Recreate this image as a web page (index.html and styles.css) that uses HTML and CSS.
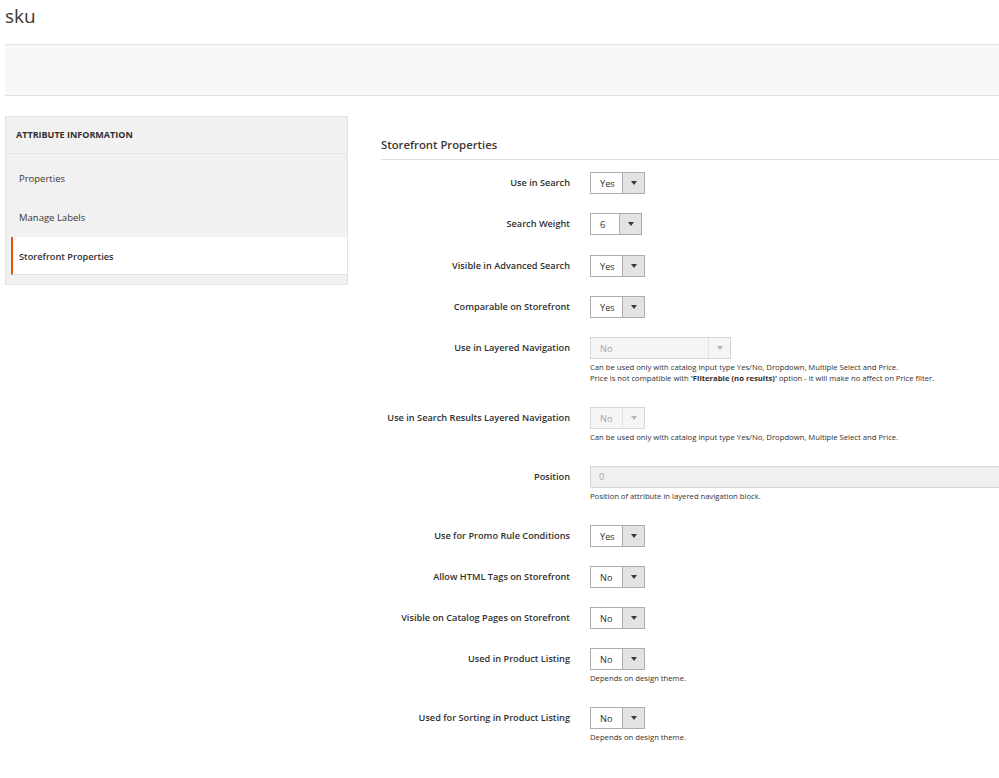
FILE: index.html
```html
<!DOCTYPE html>
<html lang="en">
<head>
<meta charset="utf-8">
<title>sku</title>
<link rel="stylesheet" href="styles.css">
</head>
<body>
<h1 class="page-title">sku</h1>
<div class="actions-bar"></div>
<div class="main">
  <aside class="sidebar">
    <div class="sidebar-head">ATTRIBUTE INFORMATION</div>
    <ul class="tabs">
      <li class="tab">Properties</li>
      <li class="tab">Manage Labels</li>
      <li class="tab active">Storefront Properties</li>
    </ul>
  </aside>
  <section class="content">
    <h2 class="section-title">Storefront Properties</h2>
    <div class="fields">
      <div class="field"><div class="label">Use in Search</div><div class="control"><div class="select w55"><span class="val">Yes</span><span class="arrow"></span></div></div></div>
      <div class="field"><div class="label">Search Weight</div><div class="control"><div class="select w52"><span class="val">6</span><span class="arrow"></span></div></div></div>
      <div class="field"><div class="label">Visible in Advanced Search</div><div class="control"><div class="select w55"><span class="val">Yes</span><span class="arrow"></span></div></div></div>
      <div class="field"><div class="label">Comparable on Storefront</div><div class="control"><div class="select w55"><span class="val">Yes</span><span class="arrow"></span></div></div></div>
      <div class="field"><div class="label">Use in Layered Navigation</div><div class="control"><div class="select disabled w141"><span class="val">No</span><span class="arrow"></span></div><div class="note">Can be used only with catalog input type Yes/No, Dropdown, Multiple Select and Price.<br>Price is not compatible with <b>'Filterable (no results)'</b> option - it will make no affect on Price filter.</div></div></div>
      <div class="field"><div class="label">Use in Search Results Layered Navigation</div><div class="control"><div class="select disabled w55"><span class="val">No</span><span class="arrow"></span></div><div class="note">Can be used only with catalog input type Yes/No, Dropdown, Multiple Select and Price.</div></div></div>
      <div class="field"><div class="label">Position</div><div class="control grow"><div class="input disabled">0</div><div class="note">Position of attribute in layered navigation block.</div></div></div>
      <div class="field"><div class="label">Use for Promo Rule Conditions</div><div class="control"><div class="select w55"><span class="val">Yes</span><span class="arrow"></span></div></div></div>
      <div class="field"><div class="label">Allow HTML Tags on Storefront</div><div class="control"><div class="select w55"><span class="val">No</span><span class="arrow"></span></div></div></div>
      <div class="field"><div class="label">Visible on Catalog Pages on Storefront</div><div class="control"><div class="select w55"><span class="val">No</span><span class="arrow"></span></div></div></div>
      <div class="field"><div class="label">Used in Product Listing</div><div class="control"><div class="select w55"><span class="val">No</span><span class="arrow"></span></div><div class="note">Depends on design theme.</div></div></div>
      <div class="field"><div class="label">Used for Sorting in Product Listing</div><div class="control"><div class="select w55"><span class="val">No</span><span class="arrow"></span></div><div class="note">Depends on design theme.</div></div></div>
    </div>
  </section>
</div>
</body>
</html>
```
FILE: styles.css
```css
html, body {
  margin: 0;
  padding: 0;
  background: #fff;
}
body {
  font-family: "Open Sans", "DejaVu Sans", sans-serif;
  color: #303030;
}
.page-title {
  margin: 0;
  padding: 0 0 0 5px;
  height: 44px;
  line-height: 32px;
  font-size: 19px;
  font-weight: 400;
  color: #41362f;
}
.actions-bar {
  margin-left: 5px;
  height: 50px;
  background: #f8f8f8;
  border-top: 1px solid #e3e3e3;
  border-bottom: 1px solid #e3e3e3;
}
.main {
  display: flex;
  gap: 33px;
  margin-top: 20px;
  padding-left: 5px;
}
.sidebar {
  width: 341px;
  flex: none;
  align-self: flex-start;
  background: #f1f1f1;
  border: 1px solid #e3e3e3;
}
.sidebar-head {
  height: 36px;
  line-height: 35px;
  padding-left: 10px;
  font-size: 9px;
  font-weight: 700;
  color: #303030;
  border-bottom: 1px solid #e3e3e3;
}
.tabs {
  list-style: none;
  margin: 0;
  padding: 5px 0 9px;
}
.tab {
  height: 39px;
  line-height: 39px;
  padding-left: 13px;
  font-size: 9.5px;
  color: #41362f;
}
.tab.active {
  margin-left: 5px;
  padding-left: 6px;
  border-left: 2px solid #eb5202;
  border-bottom: 1px solid #e3e3e3;
  background: #fff;
  height: 37px;
  line-height: 39px;
  font-size: 9.2px;
  font-weight: 600;
  color: #303030;
}
.content {
  flex: 1;
  padding-top: 20px;
}
.section-title {
  margin: 0;
  font-size: 11.3px;
  font-weight: 600;
  line-height: 18px;
  color: #41362f;
  padding-bottom: 5px;
  border-bottom: 1px solid #e0ddd6;
}
.fields {
  padding-top: 12px;
}
.field {
  display: flex;
  gap: 20px;
  margin-bottom: 19.3px;
}
.label {
  width: 189px;
  flex: none;
  text-align: right;
  font-size: 9.2px;
  font-weight: 600;
  line-height: 22px;
  color: #303030;
}
.control {
  display: flex;
  flex-direction: column;
  align-items: flex-start;
}
.control.grow {
  flex: 1;
  align-items: stretch;
}
.select {
  display: flex;
  height: 20px;
  border: 1px solid #adadad;
  background: #fff;
  box-sizing: content-box;
}
.select .val {
  flex: 1;
  padding-left: 9px;
  font-size: 9.2px;
  line-height: 22px;
  color: #303030;
}
.select .arrow {
  width: 21px;
  flex: none;
  background: #e3e3e3;
  border-left: 1px solid #adadad;
  position: relative;
}
.select .arrow::after {
  content: "";
  position: absolute;
  left: 8px;
  top: 8px;
  border-left: 3px solid transparent;
  border-right: 3px solid transparent;
  border-top: 4px solid #41362f;
}
.w55 { width: 53px; }
.w52 { width: 50px; }
.w141 { width: 139px; }
.select.disabled {
  border-color: #d6d6d6;
  background: #f5f5f5;
}
.select.disabled .val {
  color: #a6a6a6;
}
.select.disabled .arrow {
  background: #f5f5f5;
  border-left-color: #e3e3e3;
}
.select.disabled .arrow::after {
  border-top-color: #b5b5b5;
}
.input {
  height: 20px;
  line-height: 20px;
  padding-left: 8px;
  border: 1px solid #d6d6d6;
  border-right: none;
  background: #f0f0f0;
  font-size: 9.2px;
  color: #a6a6a6;
}
.note {
  margin-top: 3px;
  margin-bottom: 3.5px;
  font-size: 7.7px;
  line-height: 11px;
  color: #303030;
  white-space: nowrap;
}
.note b {
  font-weight: 700;
}
```
